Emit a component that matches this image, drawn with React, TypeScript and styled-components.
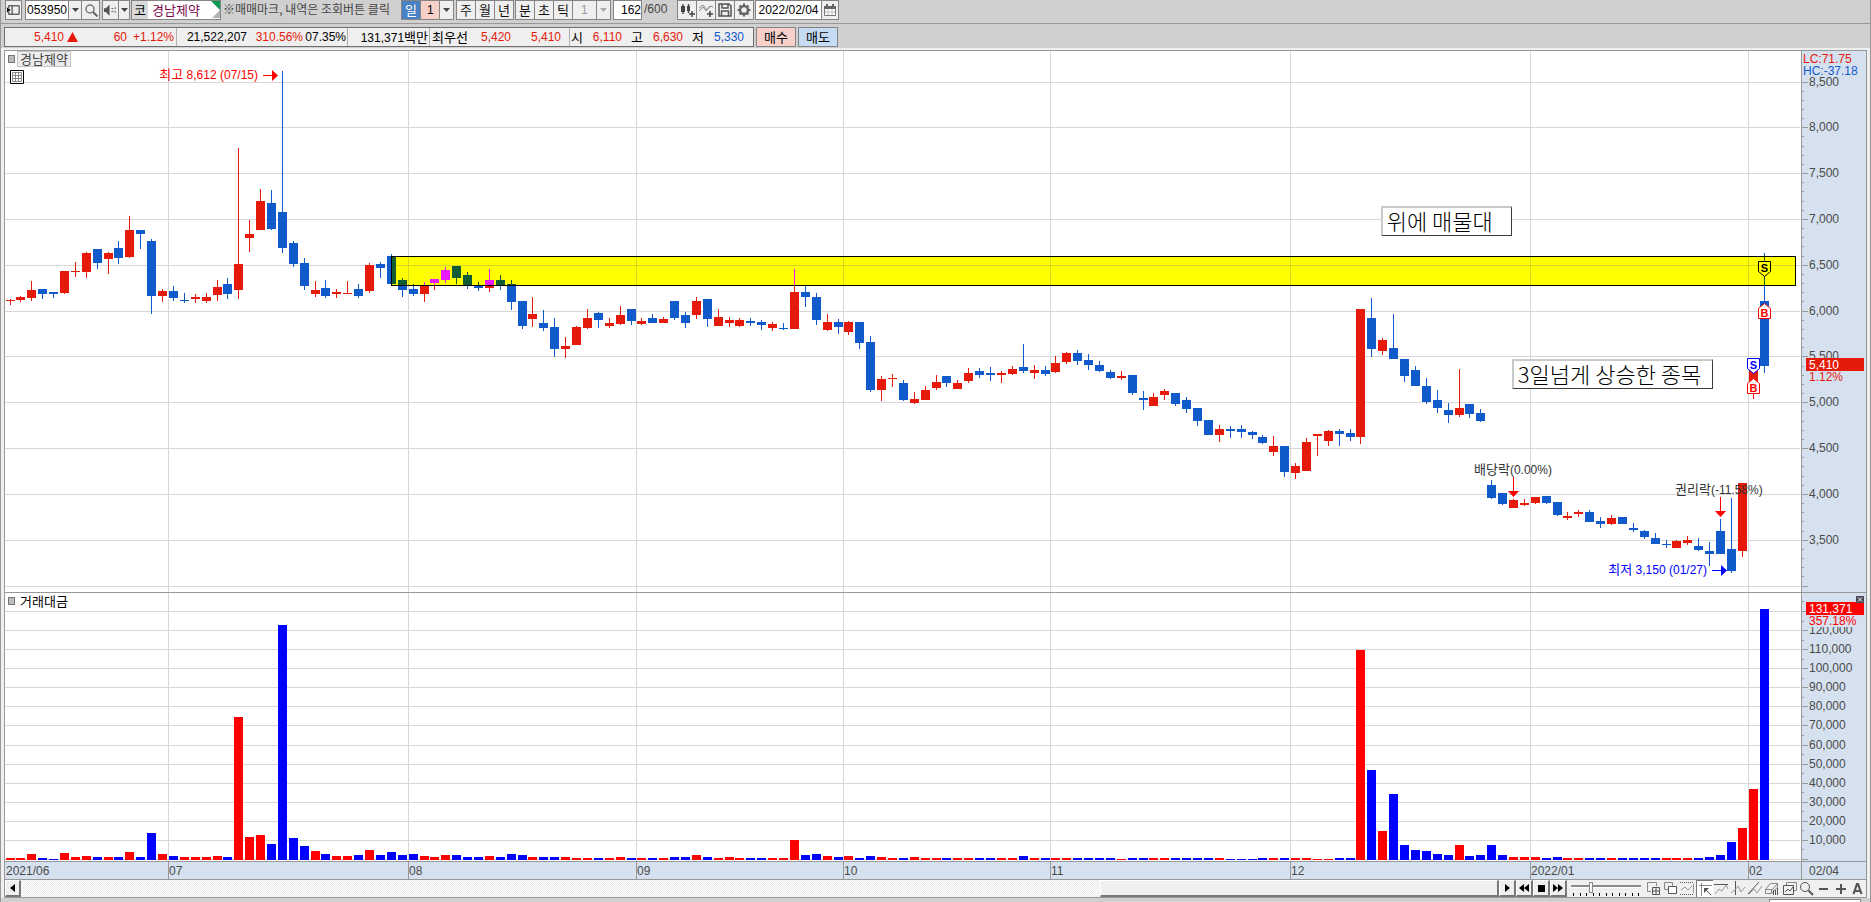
import React, { useLayoutEffect, useRef, useState } from "react";
import styled, { createGlobalStyle, css } from "styled-components";

const LATIN = `"Liberation Sans", "Noto Sans CJK KR", sans-serif`;
const HANGUL = `"Noto Sans CJK KR", sans-serif`;

const C = {
  desk: "#d0d0d0",
  face: "#efefef",
  line: "#989898",
  grid: "#d7d7d7",
  axis: "#d6e1ef",
  up: "#e61a0a",
  down: "#115acb",
  volUp: "#ff0000",
  volDown: "#0000ff",
  ink: "#4a4a4a",
};

/* ---------- data ---------- */

type Tone = "r" | "b";

// body top, body bottom, high, low (chart rows) and direction, one entry per trading day
const CANDLE_ROWS = `
300 301 299 305 r;297 300 296 302 r;290 298 281 301 r;289 294 289 299 b;292 294 292 298 b;271 293 271 294 r;
271 272 262 277 r;253 272 252 278 r;249 263 249 269 b;253 259 252 274 r;248 258 241 264 b;230 257 216 258 r;
230 234 230 249 b;241 296 239 314 b;291 296 289 302 r;291 298 286 301 b;300 301 293 303 b;297 299 294 303 r;
297 301 293 303 r;287 295 280 301 r;284 294 278 299 b;264 290 148 299 r;234 238 220 252 r;201 230 189 230 r;
203 229 190 230 b;212 248 71 253 b;243 264 241 267 b;263 286 258 290 b;290 294 281 297 r;288 296 280 298 b;
292 294 289 298 r;293 294 281 294 r;289 296 284 298 b;265 291 263 293 r;264 268 262 278 b;256 284 254 284 b;
280 290 278 297 b;289 294 284 296 b;286 294 282 302 r;279 283 279 290 r;270 280 267 283 r;266 278 266 284 b;
275 286 272 289 b;285 288 282 291 b;280 288 269 292 r;280 285 275 290 b;284 302 280 310 b;301 326 301 329 b;
314 319 297 327 r;323 328 310 331 b;327 349 318 357 b;346 349 337 358 r;327 345 326 345 r;318 328 309 329 r;
313 320 312 328 b;323 326 318 328 r;315 324 306 325 r;309 321 309 325 b;321 324 318 325 r;318 323 314 323 b;
319 323 317 323 r;301 318 301 320 b;315 323 312 328 b;301 315 297 319 r;299 319 299 327 b;317 326 309 326 r;
320 323 317 327 r;320 326 318 327 r;321 323 318 326 b;322 325 320 330 b;324 328 322 331 r;328 329 323 330 b;
292 329 269 329 r;292 297 286 307 b;297 320 293 325 b;322 330 314 331 r;322 327 319 334 b;322 332 321 335 r;
322 343 322 349 b;342 390 336 392 b;379 390 376 401 r;378 379 374 387 r;383 400 380 401 b;399 403 392 404 r;
390 400 386 400 r;382 388 375 390 r;376 383 376 387 b;383 389 380 389 r;373 381 368 383 r;371 375 368 378 b;
373 375 367 381 b;373 375 371 383 r;369 374 366 375 r;367 371 344 373 b;370 373 365 379 r;370 374 366 376 b;
363 372 356 373 r;353 362 352 364 r;353 361 350 365 b;360 365 354 370 b;365 371 361 372 b;372 378 370 379 b;
376 378 371 380 r;375 393 375 395 b;398 400 391 410 b;397 406 393 406 r;391 395 389 400 r;393 404 393 406 b;
400 409 397 413 b;408 421 408 426 b;420 435 420 435 b;429 435 425 442 r;429 431 426 438 b;429 432 425 438 b;
432 435 431 439 b;437 443 435 444 b;446 452 436 456 r;446 472 446 477 b;466 473 463 479 r;442 471 438 471 r;
434 436 434 456 r;431 441 430 446 r;431 434 429 446 b;433 437 429 441 b;309 437 309 444 r;318 349 298 357 b;
340 351 338 355 r;348 359 314 359 b;359 376 359 382 b;370 386 366 386 b;386 402 378 404 b;400 408 390 413 b;
410 415 403 423 b;408 415 369 417 r;404 414 404 418 b;413 421 409 422 b;485 498 480 499 b;493 504 493 505 b;
500 508 499 508 r;503 505 499 506 r;497 503 497 504 r;496 503 496 504 b;502 515 502 516 b;516 518 512 520 r;
512 514 510 517 r;512 522 510 522 b;521 524 517 528 b;518 524 515 525 r;517 524 517 524 b;528 530 523 532 b;
531 537 530 539 b;538 544 533 544 b;544 545 540 548 b;541 548 540 548 r;540 543 536 545 r;546 550 538 551 b;
551 554 542 566 b;531 554 519 554 b;549 571 498 573 b;483 551 483 557 r;362 390 360 399 r;301 366 253 373 b`;

// height of each traded-value bar above the base line, with its direction
const VOLUME_ROWS = `
2r 2r 6r 2b 1b 7r 3r 4r 3b 3r 3b 8r 3b 27b 6r 4b 3r 3r 3r 4r 3b 143r 23r 25r 16b 235b 22b 14b 9r 6b 4r 4r 5b 10r 5b 8b 5b 6b
4r 3r 5r 5b 3b 3b 4r 3b 6b 5b 3r 3b 3b 3r 2r 2r 2b 2r 3r 2b 2r 2b 2r 3b 3b 5r 3b 2r 3r 2r 2b 2b 2r 2r 20r 5b 6b 4r 3b
4r 2b 4b 3r 2r 2b 3r 2r 2r 2b 2r 2r 2b 2b 2r 2r 4b 2r 2b 2r 2r 2b 2b 2b 2b 1r 2b 2b 2r 2r 2b 2b 2b 2b 2r 1b 1b 1b 2b 2r 2b
2r 2r 1r 1r 2b 2b 210r 90b 29r 66b 15b 10b 9b 6b 5b 15r 4b 5b 15b 5b 3r 3r
3r 2b 3b 2r 2r 2b 2b 2r 2b 2b 2b 2b 2r 2r 2r 2b 3b 5b 18b 32r 71r 251b`;

interface Candle { top: number; bottom: number; high: number; low: number; tone: Tone }

const candles: Candle[] = CANDLE_ROWS.trim().split(";").map((row) => {
  const [top, bottom, high, low, tone] = row.trim().split(" ");
  return { top: +top, bottom: +bottom, high: +high, low: +low, tone: tone as Tone };
});

const volumes = VOLUME_ROWS.trim().split(/\s+/).map((v) => ({
  size: parseInt(v, 10),
  tone: v.slice(-1) as Tone,
}));

const months = [
  { at: 15, label: "07" }, { at: 37, label: "08" }, { at: 58, label: "09" }, { at: 77, label: "10" },
  { at: 96, label: "11" }, { at: 118, label: "12" }, { at: 140, label: "2022/01" }, { at: 160, label: "02" },
];

const PRICE = { top: 51, height: 541 };
const VOLUME = { top: 593, height: 268, base: 860 };
const AXIS_WIDTH = 64;

const priceLevels = [8500, 8000, 7500, 7000, 6500, 6000, 5500, 5000, 4500, 4000, 3500, 3000];
const priceY = (p: number) => Math.floor(82 + (8500 - p) * 0.09164);
const volumeLevels = Array.from({ length: 14 }, (_, i) => i * 10000);
const volumeY = (v: number) => Math.round(859 - v * 0.0019077);
const comma = (n: number) => n.toLocaleString("en-US");

/* ---------- page frame ---------- */

const Global = createGlobalStyle`
  * { box-sizing: border-box; }
  body { margin: 0; background: ${C.desk}; }
  button, input, select { font: inherit; color: inherit; margin: 0; padding: 0; border: 0; border-radius: 0; background: none; outline: 0; }
`;

const Window = styled.main`
  display: flex;
  flex-direction: column;
  min-height: 100vh;
  overflow: hidden;
  border: solid ${C.line};
  border-width: 0 1px;
  background: ${C.desk};
  font: 12px/18px ${LATIN};
  color: #000;
`;

const Toolbar = styled.header`
  display: flex;
  align-items: flex-start;
  gap: 2px;
  height: 24px;
  padding-left: 4px;
  border-bottom: 1px solid ${C.line};
`;

const Group = styled.div<{ $gap?: number }>`
  display: flex;
  flex: none;
  height: 20px;
  margin-left: ${(p) => p.$gap ?? 0}px;
  border: 1px solid #848484;
  background: #fff;
`;

const ToolButton = styled.button<{ $w?: number; $tone?: "day" }>`
  display: flex;
  flex: none;
  align-items: center;
  justify-content: center;
  width: ${(p) => p.$w ?? 19}px;
  background: ${(p) => (p.$tone === "day" ? "#4a80c4" : C.face)};
  color: ${(p) => (p.$tone === "day" ? "#fff" : "#111")};
  font: 13px/18px ${HANGUL};
  &:first-child { width: ${(p) => (p.$w ?? 19) - 1}px; }
  &:not(:first-child) { border-left: 1px solid #848484; }
`;

const Field = styled.input<{ $w: number; $align?: string }>`
  width: ${(p) => p.$w}px;
  background: #fff;
  text-align: ${(p) => p.$align ?? "center"};
`;

const Picker = styled.label<{ $w: number; $bg: string; $dim?: boolean }>`
  position: relative;
  display: flex;
  width: ${(p) => p.$w}px;
  border-left: 1px solid #848484;
  background: linear-gradient(to left, ${C.face} 13px, #848484 13px, #848484 14px, ${(p) => p.$bg} 14px);
  color: ${(p) => (p.$dim ? "#999" : "#000")};
  select {
    width: 100%;
    padding-left: ${(p) => (p.$dim ? 8 : 6)}px;
    appearance: none;
  }
  svg { position: absolute; right: 2px; top: 6px; pointer-events: none; }
`;

const CodeTag = styled.span`
  width: 16px;
  background: #d9d9d9;
  font: 13px/18px ${HANGUL};
  text-align: center;
`;

const StockName = styled.span`
  display: flex;
  justify-content: space-between;
  width: 72px;
  padding-left: 4px;
  color: #7c0a4c;
  font: 13px/18px ${HANGUL};
`;

const Notice = styled.p`
  flex: none;
  width: 176px;
  margin: 0;
  color: #444;
  font: 12px/18px ${HANGUL};
  white-space: nowrap;
`;

const Total = styled.span`
  width: 32px;
  color: #444;
`;

const QuoteBar = styled.section`
  display: flex;
  gap: 2px;
  height: 24px;
  padding: 3px 0 0 3px;
`;

const Quotes = styled.div`
  display: flex;
  height: 20px;
  border: 1px solid #707070;
  background: ${C.face};
`;

const Cell = styled.div<{ $w: number }>`
  display: flex;
  width: ${(p) => p.$w}px;
  white-space: nowrap;
  & + & { border-left: 1px solid #b0b0b0; }
`;

const Num = styled.span<{ $w: number; $c?: string }>`
  flex: none;
  width: ${(p) => p.$w}px;
  color: ${(p) => p.$c ?? "#000"};
  text-align: right;
  svg { display: block; margin: 4px 0 0 3px; }
`;

const Ko = styled.span`
  font: 13px/18px ${HANGUL};
`;

const Trade = styled.button<{ $bg: string }>`
  width: 40px;
  height: 20px;
  border: 1px solid #848484;
  background: ${(p) => p.$bg};
  font: 13px/18px ${HANGUL};
`;

const Frame = styled.section`
  padding: 2px 3px 0;
  background: ${C.face};
`;

const Board = styled.div`
  display: grid;
  grid-template-columns: minmax(0, 1fr) ${AXIS_WIDTH + 1}px;
  border: 1px solid ${C.line};
  background: #fff;
  svg { display: block; }
`;

const Plot = styled.div`
  position: relative;
  min-width: 0;
  border-bottom: 1px solid ${C.line};
`;

const Scale = styled.div`
  position: relative;
  border-left: 1px solid ${C.line};
  border-bottom: 1px solid ${C.line};
  background: ${C.axis};
`;

const DatePlot = styled(Plot)`
  background: ${C.axis};
`;

const Series = styled.div`
  position: absolute;
  left: 3px;
  top: 0;
  display: flex;
  align-items: center;
  gap: 2px;
  &::before {
    content: "";
    width: 5px;
    height: 6px;
    border: 1px solid #777;
    background: #bbb;
  }
`;

const SeriesName = styled.span<{ $boxed?: boolean }>`
  padding: 0 2px;
  border: 1px solid transparent;
  font: 13px/14px ${HANGUL};
  ${(p) => p.$boxed && css`
    border-color: #c4c4c4;
    background: #ececec;
    color: #444;
  `}
`;

const TableButton = styled.button`
  position: absolute;
  left: 5px;
  top: 19px;
  width: 14px;
  height: 14px;
  svg { display: block; }
`;

const Callout = styled.div<{ $left: number; $top: number; $w: number }>`
  position: absolute;
  left: ${(p) => p.$left}%;
  top: ${(p) => p.$top}px;
  width: ${(p) => p.$w}px;
  height: 30px;
  padding-left: 4px;
  border: solid;
  border-width: 2px 1px 1px 2px;
  border-color: #c9c9c9 #3c3c3c #3c3c3c #c9c9c9;
  background: #fff;
  font: 300 22px/25px ${HANGUL};
  white-space: nowrap;
`;

const ClosePane = styled.button`
  position: absolute;
  right: 2px;
  top: 3px;
  width: 8px;
  height: 7px;
  background: #4a4a55;
`;

/* ---------- bottom strip ---------- */

const Strip = styled.div`
  display: flex;
  grid-column: 1 / -1;
  height: 17px;
  background: #f0f0f0;
`;

const Bevel = styled.button<{ $w: number }>`
  display: flex;
  flex: none;
  align-items: center;
  justify-content: center;
  width: ${(p) => p.$w}px;
  border: solid;
  border-width: 1px 2px 2px 1px;
  border-color: #fff #777 #777 #fff;
  background: ${C.face};
`;

const Track = styled.div`
  display: flex;
  flex: 1;
  justify-content: flex-end;
  background: repeating-conic-gradient(#e8e8e8 0 25%, #fff 0 50%) 0 0 / 2px 2px;
`;

const Thumb = styled.div`
  width: 27%;
  border: solid;
  border-width: 1px 2px 2px 1px;
  border-color: #fff #777 #777 #fff;
  background: ${C.face};
`;

const Zoom = styled.label`
  position: relative;
  width: 78px;
  padding: 0 4px;
  input {
    display: block;
    width: 70px;
    height: 12px;
    appearance: none;
  }
  input::-webkit-slider-runnable-track {
    height: 3px;
    border-top: 2px solid #8a8a8a;
    background: #fff;
  }
  input::-webkit-slider-thumb {
    width: 4px;
    height: 11px;
    margin-top: -5px;
    appearance: none;
    border: 1px solid #8a8a8a;
    background: #f6f6f6;
  }
  svg { position: absolute; left: 6px; bottom: 0; }
`;

const Drawing = styled.button<{ $on?: boolean }>`
  width: 17px;
  height: 17px;
  background: ${(p) => (p.$on ? "#fff" : "none")};
  box-shadow: ${(p) => (p.$on ? "inset 1px 1px 0 #777" : "none")};
`;

const Below = styled.footer`
  display: flex;
  justify-content: flex-end;
  flex: 1;
  padding: 1px 9px 0 0;
`;

const Panel = styled.div`
  width: 92px;
  min-height: 3px;
  border: solid #888;
  border-width: 1px 1px 0;
  background: #fff;
`;

/* ---------- small drawings ---------- */

const Down = ({ dim }: { dim?: boolean }) => (
  <svg width="9" height="6" viewBox="0 0 9 6"><path d="M1 1h7L4.500 5z" fill={dim ? "#aaa" : "#444"} /></svg>
);

const stroke = { fill: "none", stroke: "#555", strokeWidth: 1 } as const;

const icons = {
  panel: <g><path d="M3 3.500h11v9H3M6.500 3.500v9M3 3v3M3 10v3" {...stroke} stroke="#222" /><path d="M1 5l4 3-4 3z" fill="#111" /></g>,
  search: <g><circle cx="7" cy="7" r="4" {...stroke} stroke="#777" strokeWidth="1.500" /><path d="M10 10l4.500 4.500" stroke="#666" strokeWidth="2" /></g>,
  sound: <g><path d="M1 6h2l4-4v12l-4-4H1z" fill="#555" /><path d="M9 6.500h2M9 9.500h2M13 5v2M13 9v2" {...stroke} /></g>,
  candles: <g><path d="M2 4h4v6H2zM8 4h3v5H8z" fill="#444" /><path d="M4 2v10M9.500 2v9M13 9v6M10 12h6" stroke="#444" strokeWidth="1.400" /></g>,
  wave: <g><path d="M1 6l4-3 4 5 3-4 3 1M1 9l4-4 3 4 4-5" {...stroke} stroke="#888" /><path d="M12 9v6M9 12h6" stroke="#444" strokeWidth="1.600" /></g>,
  save: <g><path d="M2 2h10l2 2v10H2zM5 2v4h6V2M4.500 14V9h7v5" {...stroke} strokeWidth="1.500" /></g>,
  gear: <g><circle cx="8" cy="8" r="4" fill="none" stroke="#666" strokeWidth="2.500" /><path d="M8 1.500v2.500M8 12v2.500M1.500 8H4M12 8h2.500M3.500 3.500L5 5M11 11l1.500 1.500M12.500 3.500L11 5M5 11l-1.500 1.500" stroke="#666" strokeWidth="2" /></g>,
  calendar: <g><path d="M2.500 4.500h11v9h-11z" {...stroke} stroke="#777" fill="#fff" /><path d="M2 4h12v3H2zM4 2h2v2H4zM10 2h2v2h-2z" fill="#666" /><path d="M6 7v6M10 7v6M3 10h10" stroke="#bbb" /></g>,
} as const;

const Icon = ({ name }: { name: keyof typeof icons }) => (
  <svg width="16" height="16" viewBox="0 0 16 16" aria-hidden>{icons[name]}</svg>
);

const drawings: { label: string; on?: boolean; art: React.ReactNode }[] = [
  { label: "추가", art: <g {...stroke}><path d="M6 11.500H2.500v-9h9V6" stroke="#888" /><path d="M7.500 7.500h7v7h-7zM11 7.500v7M7.500 11h7" /></g> },
  { label: "겹치기", art: <g {...stroke}><path d="M2.500 2.500h8v7h-8z" stroke="#888" /><path d="M6.500 6.500h8v7h-8z" fill="#fff" /></g> },
  { label: "영역", art: <g {...stroke}><path d="M1 2.500h14M1 14.500h14" strokeDasharray="1 1" /><path d="M2 10l4-3 3 3 4-4" stroke="#999" /><path d="M14.500 4v9" stroke="#999" /></g> },
  { label: "커서", on: true, art: <g {...stroke}><path d="M3 5.500h13M5.500 3v13" stroke="#888" /><path d="M8 8h5l-5 5z" fill="#555" stroke="none" /><path d="M9 9l6 6" /></g> },
  { label: "수평선", art: <g {...stroke}><path d="M1 4.500h14" /><path d="M2 14l4-5 3 2 4-6 2 4" stroke="#999" /></g> },
  { label: "수직선", art: <g {...stroke}><path d="M5.500 1v14" /><path d="M1 13l4-3 3-4 3 6 4-5" stroke="#999" /></g> },
  { label: "추세선", art: <g {...stroke}><path d="M1 14L12 2" /><path d="M2 14l5-5 3 4 5-7" stroke="#999" /></g> },
  { label: "모두 지우기", art: <g {...stroke}><path d="M1.500 9.500l5-6h7l-5 6zM1.500 9.500v4h6v-4M8 13l5.500-6V3.500" stroke="#888" /><path d="M9.500 10v5M11.500 10v5M13.500 8v7" /></g> },
  { label: "차트 복사", art: <g {...stroke}><path d="M5.500 5V2.500h10v8H13" stroke="#888" /><path d="M2.500 5.500h10v9h-10z" /><path d="M4 12l3-3 2 2 3-4" /></g> },
  { label: "돋보기", art: <g {...stroke}><circle cx="7" cy="7" r="4.500" /><path d="M10.500 10.500L15 15" strokeWidth="2" /></g> },
  { label: "축소", art: <path d="M4 9h9" stroke="#555" strokeWidth="2" /> },
  { label: "확대", art: <path d="M4 9h10M9 4v10" stroke="#555" strokeWidth="2" /> },
  { label: "글자", art: <path d="M4.500 14L8 4h1l3.500 10M6 11h5" fill="none" stroke="#555" strokeWidth="2.200" /> },
];

/* ---------- chart ---------- */

function useWidth(start: number) {
  const ref = useRef<HTMLDivElement>(null);
  const [width, setWidth] = useState(start);
  useLayoutEffect(() => {
    const node = ref.current;
    if (!node) return;
    const read = () => setWidth(node.clientWidth);
    read();
    const watch = new ResizeObserver(read);
    watch.observe(node);
    return () => watch.disconnect();
  }, []);
  return [ref, width] as const;
}

type X = (i: number) => number;

const Candles = ({ x, up, down }: { x: X; up: string; down: string }) => (
  <g shapeRendering="crispEdges">
    {candles.map((c, i) => (
      <g key={i} fill={c.tone === "r" ? up : down}>
        <rect x={x(i)} y={c.high} width={1} height={c.low - c.high} />
        <rect x={x(i) - 4} y={c.top} width={9} height={c.bottom - c.top} />
      </g>
    ))}
  </g>
);

const Grid = ({ x, w, pane, rows, color = C.grid }: { x: X; w: number; pane: { top: number; height: number }; rows: number[]; color?: string }) => (
  <g fill={color} shapeRendering="crispEdges">
    {rows.map((y) => <rect key={y} x={0} y={y} width={w - 1} height={1} />)}
    {months.map((m) => <rect key={m.at} x={x(m.at) - 5} y={pane.top} width={1} height={pane.height} />)}
  </g>
);

const Label = ({ x, y, fill, ko, children, end }: { x: number; y: number; fill: string; ko?: string; children: React.ReactNode; end?: boolean }) => (
  <text x={x} y={y} fill={fill} fontSize={12} fontFamily={LATIN} textAnchor={end ? "end" : "start"}>
    {ko && <tspan fontSize={13} fontFamily={HANGUL}>{ko}</tspan>}
    {children}
  </text>
);

const Flag = ({ x, y, kind, color, fill = "#fff", ink = color }: { x: number; y: number; kind: "S" | "B"; color: string; fill?: string; ink?: string }) => (
  <g>
    <path
      d={kind === "S" ? `M${x - 5.5} ${y + 0.5}h12v10l-6 5-6-5z` : `M${x - 5.5} ${y + 15.5}h12v-10l-6-5-6 5z`}
      fill={fill} stroke={color}
    />
    <text x={x + 0.5} y={kind === "S" ? y + 11 : y + 14} fill={ink} fontSize={11} fontWeight={700} fontFamily={LATIN} textAnchor="middle">{kind}</text>
  </g>
);

const ArrowDown = ({ x, y }: { x: number; y: number }) => (
  <path d={`M${x} ${y}h1v14h5l-5.500 6-5.500-6h5z`} fill="#ff0000" />
);

const ArrowRight = ({ x, y, fill }: { x: number; y: number; fill: string }) => (
  <path d={`M${x} ${y}h9v-5l6 5.500-6 5.500v-5h-9z`} fill={fill} />
);

function PricePlot({ w, x }: { w: number; x: X }) {
  const rows = priceLevels.map(priceY);
  const zoneX = x(35);
  const zoneW = w - 5 - zoneX;
  return (
    <svg width={w} height={PRICE.height} viewBox={`0 ${PRICE.top} ${w} ${PRICE.height}`}>
      <clipPath id="zone"><rect x={zoneX} y={256} width={zoneW} height={30} /></clipPath>
      <Grid x={x} w={w} pane={PRICE} rows={rows} />
      <Candles x={x} up={C.up} down={C.down} />
      <g clipPath="url(#zone)">
        <rect x={zoneX} y={256} width={zoneW} height={30} fill="#ffff00" />
        <Grid x={x} w={w} pane={PRICE} rows={rows} color="#d7d728" />
        <Candles x={x} up="#e61afa" down="#115c34" />
      </g>
      <rect x={zoneX + 0.5} y={256.5} width={zoneW - 1} height={29} fill="none" stroke="#000" />

      <Label x={x(25) - 24} y={79} fill="#ff0000" ko="최고" end> 8,612 (07/15)</Label>
      <ArrowRight x={x(25) - 19} y={75} fill="#ff0000" />
      <Label x={x(158) - 24} y={574} fill="#0000ff" ko="최저" end> 3,150 (01/27)</Label>
      <ArrowRight x={x(158) - 19} y={570} fill="#0000ff" />

      <Label x={x(138) - 39} y={474} fill="#333" ko="배당락">(0.00%)</Label>
      <ArrowDown x={x(138)} y={477} />
      <Label x={x(157) - 45} y={494} fill="#333" ko="권리락">(-11.58%)</Label>
      <ArrowDown x={x(157)} y={497} />

      <Flag x={x(160)} y={358} kind="S" color="#0000ff" />
      <Flag x={x(160)} y={378} kind="B" color="#ff0000" />
      <Flag x={x(161)} y={261} kind="S" color="#000" fill="#ffff00" />
      <Flag x={x(161)} y={303} kind="B" color="#ff0000" />
    </svg>
  );
}

function PriceScale() {
  const minor: number[] = [];
  for (let p = 8400; p > 3000; p -= 100) if (p % 500) minor.push(priceY(p));
  return (
    <svg width={AXIS_WIDTH} height={PRICE.height} viewBox={`0 ${PRICE.top} ${AXIS_WIDTH} ${PRICE.height}`}>
      <g fill={C.line} shapeRendering="crispEdges">
        {minor.map((y) => <rect key={y} x={0} y={y} width={2} height={1} />)}
        {priceLevels.map((p) => <rect key={p} x={0} y={priceY(p)} width={6} height={1} />)}
      </g>
      {priceLevels.slice(0, -1).map((p) => <Label key={p} x={7} y={priceY(p) + 4} fill={C.ink}>{comma(p)}</Label>)}
      <rect x={0} y={51} width={64} height={26} fill={C.axis} />
      <Label x={1} y={63} fill={C.up}>LC:71.75</Label>
      <Label x={1} y={75} fill={C.down}>HC:-37.18</Label>
      <rect x={4} y={358} width={58} height={13} fill={C.up} />
      <Label x={7} y={369} fill="#fff">5,410</Label>
      <Label x={7} y={381} fill={C.up}>1.12%</Label>
    </svg>
  );
}

function VolumePlot({ w, x }: { w: number; x: X }) {
  return (
    <svg width={w} height={VOLUME.height} viewBox={`0 ${VOLUME.top} ${w} ${VOLUME.height}`}>
      <Grid x={x} w={w} pane={VOLUME} rows={volumeLevels.map(volumeY)} />
      <g shapeRendering="crispEdges">
        {volumes.map((v, i) => (
          <rect key={i} x={x(i) - 4} y={VOLUME.base - v.size} width={9} height={v.size} fill={v.tone === "r" ? C.volUp : C.volDown} />
        ))}
      </g>
    </svg>
  );
}

function VolumeScale() {
  return (
    <svg width={AXIS_WIDTH} height={VOLUME.height} viewBox={`0 ${VOLUME.top} ${AXIS_WIDTH} ${VOLUME.height}`}>
      <g fill={C.line} shapeRendering="crispEdges">
        {volumeLevels.map((v) => (
          <React.Fragment key={v}>
            <rect x={0} y={volumeY(v)} width={6} height={1} />
            <rect x={0} y={volumeY(v + 5000)} width={2} height={1} />
          </React.Fragment>
        ))}
      </g>
      {volumeLevels.slice(1, 13).map((v) => <Label key={v} x={7} y={volumeY(v) + 4} fill={C.ink}>{comma(v)}</Label>)}
      <rect x={7} y={615} width={57} height={12} fill={C.axis} />
      <rect x={4} y={602} width={58} height={13} fill="#ff0000" />
      <Label x={7} y={613} fill="#fff">131,371</Label>
      <Label x={7} y={625} fill="#ff0000">357.18%</Label>
    </svg>
  );
}

/* ---------- app ---------- */

export default function App() {
  const [ref, w] = useWidth(1796);
  const pitch = (w - 41.9) / (candles.length - 1);
  const x: X = (i) => 5 + Math.floor(i * pitch);

  return (
    <Window>
      <Global />
      <Toolbar>
        <Group><ToolButton $w={16} aria-label="패널"><Icon name="panel" /></ToolButton></Group>
        <Group $gap={1}>
          <Field $w={42} defaultValue="053950" aria-label="종목코드" />
          <ToolButton $w={13} aria-label="종목 목록"><Down /></ToolButton>
          <ToolButton $w={18} aria-label="종목 검색"><Icon name="search" /></ToolButton>
        </Group>
        <Group>
          <ToolButton $w={16} aria-label="소리"><Icon name="sound" /></ToolButton>
          <ToolButton $w={11} aria-label="소리 설정"><Down /></ToolButton>
        </Group>
        <Group $gap={-1}>
          <CodeTag>코</CodeTag>
          <StockName>
            경남제약
            <svg width="9" height="18" viewBox="0 0 9 18"><path d="M0 0h9v9z" fill="#0a9a50" /><path d="M9 9v8H1z" fill="#b4b4b4" /></svg>
          </StockName>
        </Group>
        <Notice>※매매마크, 내역은 조회버튼 클릭</Notice>
        <Group>
          <ToolButton $tone="day">일</ToolButton>
          <Picker $w={33} $bg="#f7d0ca">
            <select defaultValue="1" aria-label="일 주기"><option>1</option><option>5</option></select>
            <Down />
          </Picker>
        </Group>
        <Group>
          {["주", "월", "년"].map((t) => <ToolButton key={t}>{t}</ToolButton>)}
        </Group>
        <Group $gap={-1}>
          {["분", "초", "틱"].map((t) => <ToolButton key={t}>{t}</ToolButton>)}
          <Picker $w={38} $bg={C.face} $dim>
            <select defaultValue="1" aria-label="분 주기"><option>1</option><option>3</option></select>
            <Down dim />
          </Picker>
        </Group>
        <Group><Field $w={27} $align="right" defaultValue="162" aria-label="표시 개수" /></Group>
        <Total>/600</Total>
        <Group $gap={-1}>
          <ToolButton aria-label="지표 추가"><Icon name="candles" /></ToolButton>
          <ToolButton aria-label="비교 추가"><Icon name="wave" /></ToolButton>
          <ToolButton aria-label="저장"><Icon name="save" /></ToolButton>
          <ToolButton aria-label="설정"><Icon name="gear" /></ToolButton>
        </Group>
        <Group $gap={-1}>
          <Field $w={65} defaultValue="2022/02/04" aria-label="기준일" />
          <ToolButton $w={17} aria-label="달력"><Icon name="calendar" /></ToolButton>
        </Group>
      </Toolbar>

      <QuoteBar>
        <Quotes>
          <Cell $w={171}>
            <Num $w={59} $c={C.up}>5,410</Num>
            <Num $w={14}><svg width="11" height="10" viewBox="0 0 11 10"><path d="M5.500 0L11 10H0z" fill={C.up} /></svg></Num>
            <Num $w={49} $c={C.up}>60</Num>
            <Num $w={47} $c={C.up}>+1.12%</Num>
          </Cell>
          <Cell $w={171}>
            <Num $w={70}>21,522,207</Num>
            <Num $w={56} $c={C.up}>310.56%</Num>
            <Num $w={43}>07.35%</Num>
          </Cell>
          <Cell $w={82}><Num $w={80}>131,371<Ko>백만</Ko></Num></Cell>
          <Cell $w={140}>
            <Num $w={38}><Ko>최우선</Ko></Num>
            <Num $w={43} $c={C.up}>5,420</Num>
            <Num $w={50} $c={C.up}>5,410</Num>
          </Cell>
          <Cell $w={184}>
            <Num $w={13}><Ko>시</Ko></Num>
            <Num $w={39} $c={C.up}>6,110</Num>
            <Num $w={21}><Ko>고</Ko></Num>
            <Num $w={40} $c={C.up}>6,630</Num>
            <Num $w={21}><Ko>저</Ko></Num>
            <Num $w={40} $c={C.down}>5,330</Num>
          </Cell>
        </Quotes>
        <Trade $bg="#f7d0ca">매수</Trade>
        <Trade $bg="#c5dcf4">매도</Trade>
      </QuoteBar>

      <Frame>
        <Board>
          <Plot ref={ref}>
            <PricePlot w={w} x={x} />
            <Series><SeriesName $boxed>경남제약</SeriesName></Series>
            <TableButton aria-label="데이터 표">
              <svg width="14" height="14" viewBox="0 0 14 14"><path d="M.5.5h13v13H.5z" fill="#fff" stroke="#000" /><path d="M2.500 2.500h9v9h-9zM2.500 5.500h9M2.500 8.500h9M5.500 2.500v9M8.500 2.500v9" fill="none" stroke="#888" /></svg>
            </TableButton>
            <Callout $left={76.6} $top={155} $w={131}>위에 매물대</Callout>
            <Callout $left={83.9} $top={308} $w={201}>3일넘게 상승한 종목</Callout>
          </Plot>
          <Scale><PriceScale /></Scale>

          <Plot>
            <VolumePlot w={w} x={x} />
            <Series><SeriesName>거래대금</SeriesName></Series>
          </Plot>
          <Scale>
            <VolumeScale />
            <ClosePane aria-label="닫기">
              <svg width="8" height="7" viewBox="0 0 8 7"><path d="M2 1.500l4 4M6 1.500l-4 4" stroke="#fff" /></svg>
            </ClosePane>
          </Scale>

          <DatePlot>
            <svg width={w} height={17}>
              <Label x={1} y={13} fill={C.ink}>2021/06</Label>
              {months.map((m) => (
                <g key={m.at}>
                  <rect x={x(m.at) - 5} y={0} width={1} height={17} fill={C.line} />
                  <Label x={x(m.at) - 4} y={13} fill={C.ink}>{m.label}</Label>
                </g>
              ))}
            </svg>
          </DatePlot>
          <Scale><svg width={AXIS_WIDTH} height={17}><Label x={7} y={13} fill={C.ink}>02/04</Label></svg></Scale>

          <Strip>
            <Bevel $w={16} aria-label="이전"><svg width="5" height="8"><path d="M5 0v8L0 4z" /></svg></Bevel>
            <Track><Thumb /></Track>
            <Bevel $w={17} aria-label="다음"><svg width="5" height="8"><path d="M0 0v8l5-4z" /></svg></Bevel>
            <Bevel $w={17} aria-label="뒤로"><svg width="10" height="8"><path d="M5 0v8L0 4zM10 0v8L5 4z" /></svg></Bevel>
            <Bevel $w={17} aria-label="정지"><svg width="7" height="7"><path d="M0 0h7v7H0z" /></svg></Bevel>
            <Bevel $w={17} aria-label="앞으로"><svg width="10" height="8"><path d="M0 0v8l5-4zM5 0v8l5-4z" /></svg></Bevel>
            <Zoom>
              <input type="range" min={0} max={100} defaultValue={28} aria-label="확대 비율" />
              <svg width="68" height="4">
                {Array.from({ length: 11 }, (_, i) => <rect key={i} x={Math.round(i * 6.5)} y={0} width={1} height={3} />)}
              </svg>
            </Zoom>
            {drawings.map((d) => (
              <Drawing key={d.label} $on={d.on} aria-label={d.label}><svg width="17" height="17" viewBox="0 0 17 17">{d.art}</svg></Drawing>
            ))}
          </Strip>
        </Board>
      </Frame>
      <Below><Panel /></Below>
    </Window>
  );
}
